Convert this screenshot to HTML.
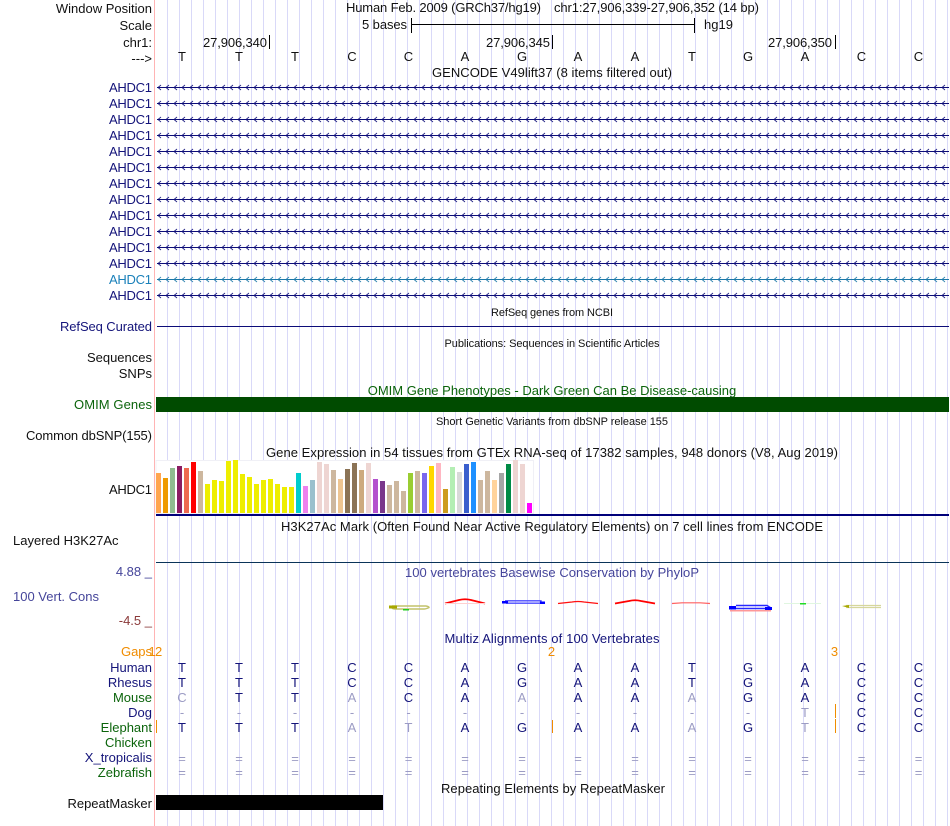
<!DOCTYPE html>
<html><head><meta charset="utf-8"><title>Genome Browser</title>
<style>
html,body{margin:0;padding:0;background:#fff;width:950px;height:826px;overflow:hidden}
svg{display:block}
text{font-family:"Liberation Sans",sans-serif;font-size:13px;fill:#111}
.r{text-anchor:end}
.c{text-anchor:middle}
.s{font-size:11px}
.n{fill:#14147a}
.g{fill:#0b640b}
.f{fill:#9c9cc4}
.o{fill:#f08c00}
.p{fill:#45459a}
</style></head><body>
<svg width="950" height="826" viewBox="0 0 950 826" xmlns="http://www.w3.org/2000/svg">
<defs>
<pattern id="a" x="157" y="84" width="8" height="16" patternUnits="userSpaceOnUse"><path d="M0 3.5H8" fill="none" stroke="#0c0c78" stroke-width="1"/><path d="M4 1L1 3.5L4 6" fill="none" stroke="#0c0c78" stroke-width=".9" stroke-opacity=".9"/></pattern>
<pattern id="b" x="157" y="84" width="8" height="16" patternUnits="userSpaceOnUse"><path d="M0 3.5H8" fill="none" stroke="#1b78a8" stroke-width="1"/><path d="M4 1L1 3.5L4 6" fill="none" stroke="#1b78a8" stroke-width=".9" stroke-opacity=".9"/></pattern>
</defs>
<rect width="950" height="826" fill="#fff"/>
<path shape-rendering="crispEdges" fill="none" stroke="#d9d9f8" stroke-width="1" d="M167.5 0V826M179.5 0V826M191.5 0V826M203.5 0V826M215.5 0V826M227.5 0V826M239.5 0V826M251.5 0V826M263.5 0V826M275.5 0V826M287.5 0V826M299.5 0V826M311.5 0V826M323.5 0V826M335.5 0V826M347.5 0V826M359.5 0V826M371.5 0V826M383.5 0V826M395.5 0V826M407.5 0V826M419.5 0V826M431.5 0V826M443.5 0V826M455.5 0V826M467.5 0V826M479.5 0V826M491.5 0V826M503.5 0V826M515.5 0V826M527.5 0V826M539.5 0V826M551.5 0V826M563.5 0V826M575.5 0V826M587.5 0V826M599.5 0V826M611.5 0V826M623.5 0V826M635.5 0V826M647.5 0V826M659.5 0V826M671.5 0V826M683.5 0V826M695.5 0V826M707.5 0V826M719.5 0V826M731.5 0V826M743.5 0V826M755.5 0V826M767.5 0V826M779.5 0V826M791.5 0V826M803.5 0V826M815.5 0V826M827.5 0V826M839.5 0V826M851.5 0V826M863.5 0V826M875.5 0V826M887.5 0V826M899.5 0V826M911.5 0V826M923.5 0V826M935.5 0V826M947.5 0V826"/>
<rect x="154" width="1" height="826" fill="#ffb4b4"/>

<!-- header -->
<text class="r" x="152" y="13">Window Position</text>
<text x="346" y="12" textLength="195">Human Feb. 2009 (GRCh37/hg19)</text>
<text x="554" y="12" textLength="205">chr1:27,906,339-27,906,352 (14 bp)</text>
<text class="r" x="152" y="30">Scale</text>
<text class="r" x="407" y="29" textLength="45">5 bases</text>
<path d="M411.500 18V33M694.500 18V33M411 24.500H695" stroke="#000" fill="none"/>
<text x="704" y="29">hg19</text>
<text class="r" x="152" y="47">chr1:</text>
<text class="r" x="267" y="47" textLength="64">27,906,340</text>
<text class="r" x="550" y="47" textLength="64">27,906,345</text>
<text class="r" x="832" y="47" textLength="64">27,906,350</text>
<path d="M269.500 35V49M552.500 35V49M835.500 35V49" stroke="#000" fill="none"/>
<text class="r" x="152" y="63">---&gt;</text>
<text class="c" x="182 239 295 352 408.500 465 522 578 635 692 748 805 861.500 918.500" y="61">TTTCCAGAATGACC</text>
<text class="c" x="552" y="77" textLength="240">GENCODE V49lift37 (8 items filtered out)</text>

<!-- genes -->
<g>
<text class="r n" x="152" y="92" textLength="43">AHDC1</text>
<text class="r n" x="152" y="108" textLength="43">AHDC1</text>
<text class="r n" x="152" y="124" textLength="43">AHDC1</text>
<text class="r n" x="152" y="140" textLength="43">AHDC1</text>
<text class="r n" x="152" y="156" textLength="43">AHDC1</text>
<text class="r n" x="152" y="172" textLength="43">AHDC1</text>
<text class="r n" x="152" y="188" textLength="43">AHDC1</text>
<text class="r n" x="152" y="204" textLength="43">AHDC1</text>
<text class="r n" x="152" y="220" textLength="43">AHDC1</text>
<text class="r n" x="152" y="236" textLength="43">AHDC1</text>
<text class="r n" x="152" y="252" textLength="43">AHDC1</text>
<text class="r n" x="152" y="268" textLength="43">AHDC1</text>
<text class="r" style="fill:#1b81ba" x="152" y="284" textLength="43">AHDC1</text>
<text class="r n" x="152" y="300" textLength="43">AHDC1</text>
</g>
<rect x="157" y="84" width="792" height="8" fill="url(#a)"/>
<rect x="157" y="100" width="792" height="8" fill="url(#a)"/>
<rect x="157" y="116" width="792" height="8" fill="url(#a)"/>
<rect x="157" y="132" width="792" height="8" fill="url(#a)"/>
<rect x="157" y="148" width="792" height="8" fill="url(#a)"/>
<rect x="157" y="164" width="792" height="8" fill="url(#a)"/>
<rect x="157" y="180" width="792" height="8" fill="url(#a)"/>
<rect x="157" y="196" width="792" height="8" fill="url(#a)"/>
<rect x="157" y="212" width="792" height="8" fill="url(#a)"/>
<rect x="157" y="228" width="792" height="8" fill="url(#a)"/>
<rect x="157" y="244" width="792" height="8" fill="url(#a)"/>
<rect x="157" y="260" width="792" height="8" fill="url(#a)"/>
<rect x="157" y="276" width="792" height="8" fill="url(#b)"/>
<rect x="157" y="292" width="792" height="8" fill="url(#a)"/>

<!-- refseq etc -->
<text class="c s" x="552" y="316" textLength="122">RefSeq genes from NCBI</text>
<text class="r n" x="152" y="331" textLength="92">RefSeq Curated</text>
<rect x="157" y="326" width="792" height="1" fill="#0c0c78"/>
<text class="c s" x="552" y="347" textLength="215">Publications: Sequences in Scientific Articles</text>
<text class="r" x="152" y="362">Sequences</text>
<text class="r" x="152" y="378">SNPs</text>
<text class="c g" x="552" y="395">OMIM Gene Phenotypes - Dark Green Can Be Disease-causing</text>
<text class="r g" x="152" y="409" textLength="78">OMIM Genes</text>
<rect x="156" y="397" width="793" height="15" fill="#004b00"/>
<text class="c s" x="552" y="425" textLength="232">Short Genetic Variants from dbSNP release 155</text>
<text class="r" x="152" y="440" textLength="126">Common dbSNP(155)</text>
<text class="c" x="552" y="457" textLength="572">Gene Expression in 54 tissues from GTEx RNA-seq of 17382 samples, 948 donors (V8, Aug 2019)</text>
<text class="r" x="152" y="494" textLength="43">AHDC1</text>

<!-- GTEx bars -->
<rect x="156" y="460.500" width="377.500" height="53" fill="#fff" stroke="#f0f0f6"/>
<g>
<rect x="156" y="473" width="5" height="40" fill="#FFA54F"/>
<rect x="163" y="478" width="5" height="35" fill="#EE9A00"/>
<rect x="170" y="468" width="5" height="45" fill="#8FBC8F"/>
<rect x="177" y="466" width="5" height="47" fill="#8B1C62"/>
<rect x="184" y="468" width="5" height="45" fill="#EE6A50"/>
<rect x="191" y="462" width="5" height="51" fill="#FF0000"/>
<rect x="198" y="471" width="5" height="42" fill="#CDB79E"/>
<rect x="205" y="484" width="5" height="29" fill="#EEEE00"/>
<rect x="212" y="480" width="5" height="33" fill="#EEEE00"/>
<rect x="219" y="481" width="5" height="32" fill="#EEEE00"/>
<rect x="226" y="461" width="5" height="52" fill="#EEEE00"/>
<rect x="233" y="460" width="5" height="53" fill="#EEEE00"/>
<rect x="240" y="474" width="5" height="39" fill="#EEEE00"/>
<rect x="247" y="477" width="5" height="36" fill="#EEEE00"/>
<rect x="254" y="484" width="5" height="29" fill="#EEEE00"/>
<rect x="261" y="480" width="5" height="33" fill="#EEEE00"/>
<rect x="268" y="479" width="5" height="34" fill="#EEEE00"/>
<rect x="275" y="484" width="5" height="29" fill="#EEEE00"/>
<rect x="282" y="487" width="5" height="26" fill="#EEEE00"/>
<rect x="289" y="487" width="5" height="26" fill="#EEEE00"/>
<rect x="296" y="473" width="5" height="40" fill="#00CDCD"/>
<rect x="303" y="486" width="5" height="27" fill="#EE82EE"/>
<rect x="310" y="480" width="5" height="33" fill="#9AC0CD"/>
<rect x="317" y="462" width="5" height="51" fill="#EED5D2"/>
<rect x="324" y="464" width="5" height="49" fill="#EED5D2"/>
<rect x="331" y="470" width="5" height="43" fill="#CDB79E"/>
<rect x="338" y="479" width="5" height="34" fill="#EEC591"/>
<rect x="345" y="469" width="5" height="44" fill="#8B7355"/>
<rect x="352" y="463" width="5" height="50" fill="#8B7355"/>
<rect x="359" y="470" width="5" height="43" fill="#CDAA7D"/>
<rect x="366" y="463" width="5" height="50" fill="#EED5D2"/>
<rect x="373" y="479" width="5" height="34" fill="#B452CD"/>
<rect x="380" y="481" width="5" height="32" fill="#7A378B"/>
<rect x="387" y="485" width="5" height="28" fill="#CDB79E"/>
<rect x="394" y="481" width="5" height="32" fill="#CDB79E"/>
<rect x="401" y="491" width="5" height="22" fill="#CDB79E"/>
<rect x="408" y="473" width="5" height="40" fill="#9ACD32"/>
<rect x="415" y="471" width="5" height="42" fill="#CDB79E"/>
<rect x="422" y="473" width="5" height="40" fill="#7A67EE"/>
<rect x="429" y="466" width="5" height="47" fill="#FFD700"/>
<rect x="436" y="463" width="5" height="50" fill="#FFB6C1"/>
<rect x="443" y="489" width="5" height="24" fill="#CD9B1D"/>
<rect x="450" y="467" width="5" height="46" fill="#B4EEB4"/>
<rect x="457" y="472" width="5" height="41" fill="#D9D9D9"/>
<rect x="464" y="464" width="5" height="49" fill="#3A5FCD"/>
<rect x="471" y="462" width="5" height="51" fill="#1E90FF"/>
<rect x="478" y="480" width="5" height="33" fill="#CDB79E"/>
<rect x="485" y="471" width="5" height="42" fill="#CDB79E"/>
<rect x="492" y="480" width="5" height="33" fill="#FFD39B"/>
<rect x="499" y="473" width="5" height="40" fill="#A6A6A6"/>
<rect x="506" y="464" width="5" height="49" fill="#008B45"/>
<rect x="513" y="460" width="5" height="53" fill="#EED5D2"/>
<rect x="520" y="464" width="5" height="49" fill="#EED5D2"/>
<rect x="527" y="503" width="5" height="10" fill="#FF00FF"/>
</g>
<rect x="156" y="514" width="793" height="2" fill="#00007a"/>

<!-- H3K27Ac -->
<text class="c" x="552" y="531" textLength="542">H3K27Ac Mark (Often Found Near Active Regulatory Elements) on 7 cell lines from ENCODE</text>
<text x="13" y="545">Layered H3K27Ac</text>
<rect x="156" y="562" width="793" height="1" fill="#0a3458"/>

<!-- conservation -->
<text class="r p" x="152" y="576">4.88 _</text>
<text x="13" y="601" class="p">100 Vert. Cons</text>
<text class="r" style="fill:#8b3a3a" x="152" y="625">-4.5 _</text>
<text class="c p" x="552" y="577" textLength="294">100 vertebrates Basewise Conservation by PhyloP</text>

<g fill="none">
<path d="M392 606H426Q429 606.500 429 607.500Q426 609 424 609H396Q392 609 392 607.500" stroke="#c2c26a" stroke-width="1.500"/>
<path d="M389 605.500H397V608.500H389z" fill="#a8a800"/>
<rect x="403" y="609" width="6" height="1.500" fill="#22cc22"/>
<path d="M445 603.500L459 600Q465 598.500 471 600L485 603.500" stroke="#ff0000" stroke-width="1.800"/>
<path d="M445 603.500H485" stroke="#ffd0d0" stroke-width="1"/>
<path d="M505 600.800H541V603M506 603.200H540" stroke="#4a4aff" stroke-width="1.300"/>
<rect x="502" y="601" width="6" height="2.500" fill="#0000ff"/>
<rect x="540" y="601.500" width="5" height="2.500" fill="#0000ff"/>
<path d="M558 603.500L572 602Q578 601 584 602L598 603.500" stroke="#ff1010" stroke-width="1.300"/>
<path d="M615 603.500L629 601Q635 599.500 641 601L655 603.500" stroke="#ff0000" stroke-width="1.800"/>
<path d="M672 603.500L682 602.800H700L710 603.500" stroke="#ff6060" stroke-width="1.200"/>
<path d="M736 605.500H767L771 608M735 608.500H770" stroke="#2828ff" stroke-width="1.400"/>
<rect x="729" y="606" width="7" height="3.500" fill="#0000ff"/>
<rect x="765" y="607" width="7" height="3" fill="#0000ff"/>
<rect x="730" y="610" width="41" height="1.500" fill="#ff9898"/>
<rect x="784" y="603" width="37" height="1" fill="#e0f6e0"/>
<rect x="800" y="603" width="6" height="1.500" fill="#22dd22"/>
<path d="M846 605.500H881M846 607.500H881" stroke="#d6d69c" stroke-width="1.200"/>
<path d="M842 606L849 605V608z" fill="#a8a800"/>
</g>

<!-- multiz -->
<text class="c n" x="552" y="643" textLength="215">Multiz Alignments of 100 Vertebrates</text>
<text class="r o" x="152" y="656" textLength="31">Gaps</text>
<text class="o" x="148.500" y="656">1</text>
<text class="o" x="155" y="656">2</text>
<text class="c o" x="551.500" y="656">2</text>
<text class="c o" x="834.500" y="656">3</text>
<rect x="156" y="720" width="1" height="13" fill="#f08c00"/>
<rect x="552" y="720" width="1" height="13" fill="#f08c00"/>
<rect x="835" y="704" width="1" height="14" fill="#f08c00"/>
<rect x="835" y="719" width="1" height="14" fill="#f08c00"/>

<text class="r n" x="152" y="672">Human</text>
<text class="r n" x="152" y="687">Rhesus</text>
<text class="r g" x="152" y="702">Mouse</text>
<text class="r n" x="152" y="717">Dog</text>
<text class="r g" x="152" y="732">Elephant</text>
<text class="r g" x="152" y="747">Chicken</text>
<text class="r n" x="152" y="762">X_tropicalis</text>
<text class="r g" x="152" y="777">Zebrafish</text>

<text class="c n" x="182 239 295 352 408.500 465 522 578 635 692 748 805 861.500 918.500" y="672">TTTCCAGAATGACC</text>
<text class="c n" x="182 239 295 352 408.500 465 522 578 635 692 748 805 861.500 918.500" y="687">TTTCCAGAATGACC</text>
<text class="c n" x="182 239 295 352 408.500 465 522 578 635 692 748 805 861.500 918.500" y="702"><tspan class="f">C</tspan>TT<tspan class="f">A</tspan>CA<tspan class="f">A</tspan>AA<tspan class="f">A</tspan>GACC</text>
<text class="c f" x="182 239 295 352 408.500 465 522 578 635 692 748 805 861.500 918.500" y="717">-----------T<tspan class="n">CC</tspan></text>
<text class="c n" x="182 239 295 352 408.500 465 522 578 635 692 748 805 861.500 918.500" y="732">TTT<tspan class="f">AT</tspan>AGAA<tspan class="f">A</tspan>G<tspan class="f">T</tspan>CC</text>
<text class="c f" x="182 239 295 352 408.500 465 522 578 635 692 748 805 861.500 918.500" y="763">==============</text>
<text class="c f" x="182 239 295 352 408.500 465 522 578 635 692 748 805 861.500 918.500" y="777">==============</text>

<!-- repeat masker -->
<text class="c" x="553" y="793" textLength="224">Repeating Elements by RepeatMasker</text>
<text class="r" x="152" y="808">RepeatMasker</text>
<rect x="156" y="795" width="227" height="15" fill="#000"/>
</svg>
</body></html>
